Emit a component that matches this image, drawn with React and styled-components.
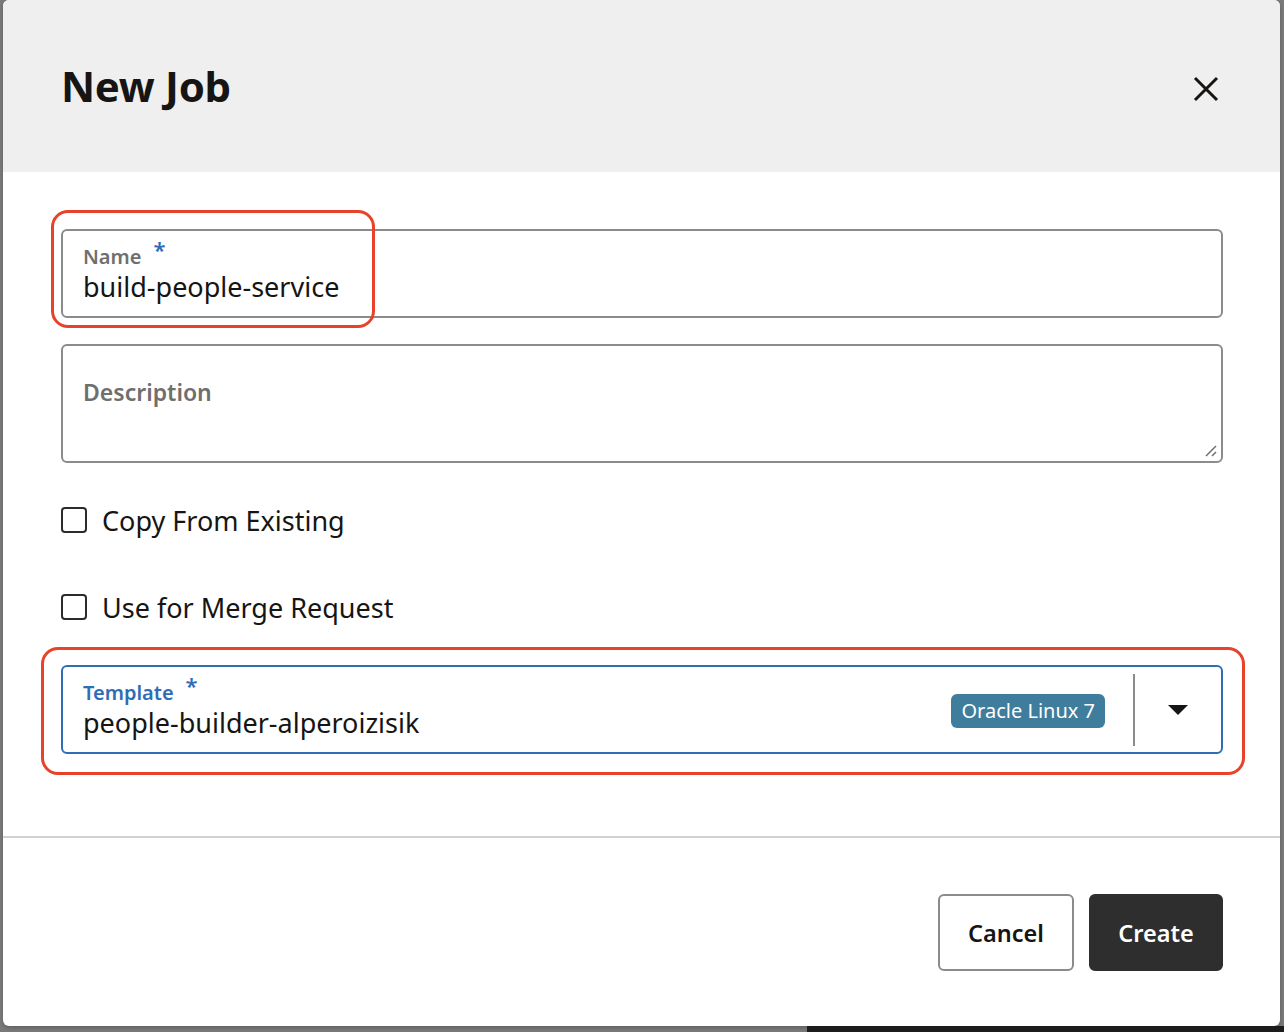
import React from 'react';
import styled, { createGlobalStyle } from 'styled-components';

const GlobalStyle = createGlobalStyle`
  html, body {
    margin: 0;
    padding: 0;
    background: #7a7a7a;
  }
  body {
    font-family: "Noto Sans", "Open Sans", Arial, sans-serif;
    color: #161513;
  }
`;

const Backdrop = styled.div`
  position: relative;
  width: 1284px;
  height: 1032px;
  overflow: hidden;
  background: #7a7a7a;
`;

const BottomStrip = styled.div`
  position: absolute;
  left: 807px;
  right: 0;
  bottom: 0;
  height: 6px;
  background: #1c1c1c;
`;

const Dialog = styled.div`
  position: relative;
  margin-left: 3px;
  width: 1277px;
  height: 1026px;
  background: #fff;
  border-radius: 6px;
  overflow: hidden;
  display: flex;
  flex-direction: column;
  box-shadow: 0 2px 4px rgba(0, 0, 0, 0.2);
`;

const Header = styled.div`
  height: 172px;
  flex-shrink: 0;
  background: #efefef;
  display: flex;
  align-items: center;
  justify-content: space-between;
  padding: 0 59px 0 58px;
  box-sizing: border-box;
`;

const Title = styled.h1`
  margin: 0;
  font-size: 42px;
  font-weight: 700;
  color: #161513;
  letter-spacing: -0.3px;
  padding-bottom: 2px;
`;

const CloseButton = styled.button`
  width: 30px;
  height: 30px;
  padding: 0;
  border: none;
  background: transparent;
  display: flex;
  align-items: center;
  justify-content: center;
  cursor: pointer;
  margin-top: 5px;
`;

const Body = styled.div`
  padding: 57px 57px 82px 58px;
  display: flex;
  flex-direction: column;
`;

const Field = styled.div`
  position: relative;
  height: ${({ h }) => h}px;
  border: ${({ focused }) => (focused ? '2px solid #2f6db5' : '2px solid #8b8b8b')};
  border-radius: 6px;
  box-sizing: border-box;
  display: flex;
  align-items: center;
  margin-top: ${({ mt }) => mt || 0}px;
`;

const FieldMain = styled.div`
  flex: 1;
  padding-left: 20px;
  display: flex;
  flex-direction: column;
  align-self: ${({ top }) => (top ? 'flex-start' : 'center')};
  padding-top: ${({ top }) => (top ? '31px' : '0')};
`;

const Label = styled.div`
  font-size: 20px;
  font-weight: 600;
  line-height: 26px;
  color: ${({ focused }) => (focused ? '#2f6db5' : '#6f6f6f')};
  display: flex;
  align-items: flex-start;
`;

const Required = styled.span`
  color: #2f6db5;
  font-size: 22px;
  font-weight: 600;
  margin-left: 12px;
  line-height: 18px;
  margin-top: -4px;
`;

const Value = styled.div`
  font-size: 27px;
  line-height: 34px;
  color: #161513;
`;

const Placeholder = styled.div`
  font-size: 23px;
  font-weight: 600;
  color: #6f6f6f;
  line-height: 30px;
`;

const ResizeHandle = styled.svg`
  position: absolute;
  right: 2px;
  bottom: 2px;
`;

const CheckRow = styled.label`
  display: flex;
  align-items: center;
  height: 40px;
  margin-top: ${({ mt }) => mt}px;
  font-size: 27px;
  color: #161513;
  cursor: pointer;
`;

const Box = styled.span`
  width: 26px;
  height: 26px;
  box-sizing: border-box;
  border: 2px solid #2b2b2b;
  border-radius: 4px;
  margin-right: 15px;
  flex-shrink: 0;
`;

const Badge = styled.span`
  background: #3f7d9c;
  color: #fff;
  font-size: 20px;
  line-height: 34px;
  height: 34px;
  padding: 0 10px;
  border-radius: 6px;
  white-space: nowrap;
  margin-top: 2px;
`;

const Divider = styled.span`
  width: 2px;
  height: 72px;
  background: #8b8b8b;
  margin-left: 28px;
`;

const ArrowBox = styled.span`
  width: 86px;
  display: flex;
  align-items: center;
  justify-content: center;
`;

const Highlight = styled.div`
  position: absolute;
  left: ${({ l }) => l}px;
  top: ${({ t }) => t}px;
  width: ${({ w }) => w}px;
  height: ${({ hh }) => hh}px;
  border: 3.5px solid #e8432a;
  border-radius: 17px;
  box-sizing: border-box;
  pointer-events: none;
`;

const Separator = styled.div`
  height: 2px;
  background: #d2d2d2;
`;

const Footer = styled.div`
  display: flex;
  justify-content: flex-end;
  gap: 15px;
  padding: 56px 57px 0 0;
`;

const Button = styled.button`
  height: 77px;
  width: ${({ w }) => w}px;
  padding: 0;
  font-family: "Noto Sans", "Open Sans", Arial, sans-serif;
  font-size: 23.5px;
  font-weight: 600;
  border-radius: 6px;
  box-sizing: border-box;
  border: ${({ primary }) => (primary ? '2px solid #2e2e2e' : '2px solid #8b8b8b')};
  background: ${({ primary }) => (primary ? '#2e2e2e' : '#fff')};
  color: ${({ primary }) => (primary ? '#fff' : '#161513')};
  cursor: pointer;
`;

const App = () => {
  return (
    <Backdrop>
      <GlobalStyle />
      <Dialog>
        <Header>
          <Title>New Job</Title>
          <CloseButton aria-label="Close">
            <svg width="26" height="26" viewBox="0 0 26 26">
              <path d="M2 2 L24 24 M24 2 L2 24" stroke="#161513" strokeWidth="3" />
            </svg>
          </CloseButton>
        </Header>

        <Body>
          <Field h={89}>
            <FieldMain>
              <Label>
                Name<Required>*</Required>
              </Label>
              <Value>build-people-service</Value>
            </FieldMain>
            <Highlight l={-12} t={-21} w={324} hh={118} />
          </Field>

          <Field h={119} mt={26}>
            <FieldMain top>
              <Placeholder>Description</Placeholder>
            </FieldMain>
            <ResizeHandle width="16" height="16" viewBox="0 0 16 16">
              <path d="M3 13 L13 3 M9 13 L13 9" stroke="#6f6f6f" strokeWidth="1.5" />
            </ResizeHandle>
          </Field>

          <CheckRow mt={37}>
            <Box />
            Copy From Existing
          </CheckRow>

          <CheckRow mt={47}>
            <Box />
            Use for Merge Request
          </CheckRow>

          <Field h={89} mt={38} focused>
            <FieldMain>
              <Label focused>
                Template<Required>*</Required>
              </Label>
              <Value>people-builder-alperoizisik</Value>
            </FieldMain>
            <Badge>Oracle Linux 7</Badge>
            <Divider />
            <ArrowBox>
              <svg width="22" height="12" viewBox="0 0 22 12">
                <path d="M1 1 L21 1 L11 11 Z" fill="#161513" />
              </svg>
            </ArrowBox>
            <Highlight l={-22} t={-20} w={1204} hh={128} />
          </Field>
        </Body>

        <Separator />

        <Footer>
          <Button w={136}>Cancel</Button>
          <Button w={134} primary>Create</Button>
        </Footer>
      </Dialog>
      <BottomStrip />
    </Backdrop>
  );
};

export default App;
